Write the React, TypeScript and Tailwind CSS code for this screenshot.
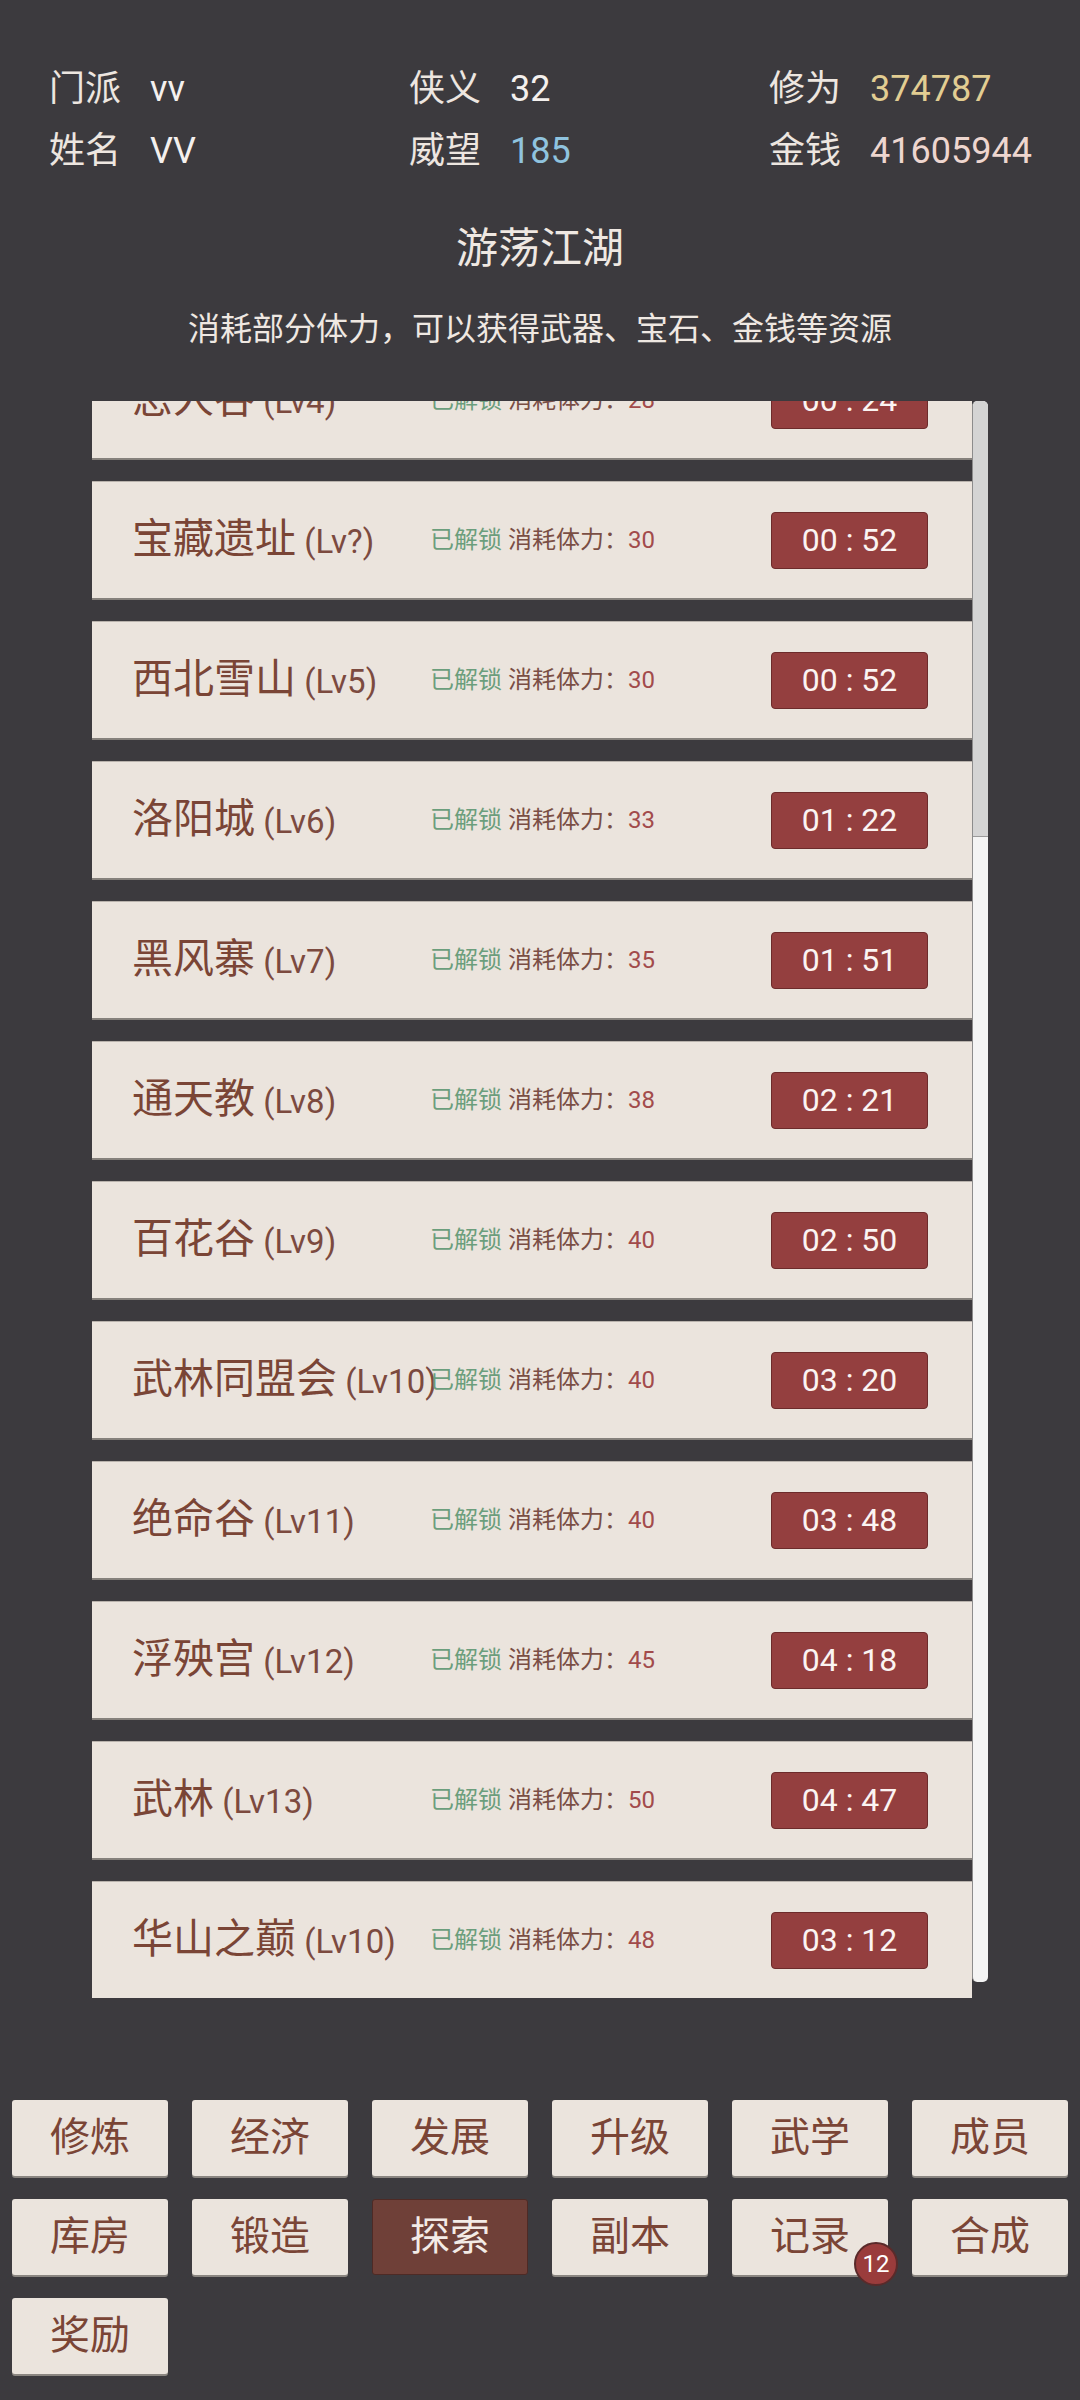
import React from 'react'

const places = [
    { name: '恶人谷', lv: 'Lv4', cost: 28, time: '00 : 24' },
    { name: '宝藏遗址', lv: 'Lv?', cost: 30, time: '00 : 52' },
    { name: '西北雪山', lv: 'Lv5', cost: 30, time: '00 : 52' },
    { name: '洛阳城', lv: 'Lv6', cost: 33, time: '01 : 22' },
    { name: '黑风寨', lv: 'Lv7', cost: 35, time: '01 : 51' },
    { name: '通天教', lv: 'Lv8', cost: 38, time: '02 : 21' },
    { name: '百花谷', lv: 'Lv9', cost: 40, time: '02 : 50' },
    { name: '武林同盟会', lv: 'Lv10', cost: 40, time: '03 : 20' },
    { name: '绝命谷', lv: 'Lv11', cost: 40, time: '03 : 48' },
    { name: '浮殃宫', lv: 'Lv12', cost: 45, time: '04 : 18' },
    { name: '武林', lv: 'Lv13', cost: 50, time: '04 : 47' },
    { name: '华山之巅', lv: 'Lv10', cost: 48, time: '03 : 12' },
]

const tabs = ['修炼', '经济', '发展', '升级', '武学', '成员', '库房', '锻造', '探索', '副本', '记录', '合成', '奖励']

const stats = [
    [
        { label: '门派', value: 'vv', color: 'text-[#f4f0ee]' },
        { label: '姓名', value: 'VV', color: 'text-[#f4f0ee]' },
    ],
    [
        { label: '侠义', value: '32', color: 'text-[#f4f0ee]' },
        { label: '威望', value: '185', color: 'text-[#8fc3df]' },
    ],
    [
        { label: '修为', value: '374787', color: 'text-[#e2cd92]' },
        { label: '金钱', value: '41605944', color: 'text-[#eed6cf]' },
    ],
]

const App = () => {
    return (
        <div className="min-h-[2400px] bg-[#3c3a3e] font-[Roboto,'Noto_Sans_CJK_SC',sans-serif] pt-[58px]">
            {/* header stats */}
            <div className="grid grid-cols-3">
                {stats.map((col, i) => (
                    <div key={i} className="pl-[49px] flex flex-col">
                        {col.map(s => (
                            <div key={s.label} className="flex items-center h-[62px] text-[36px] leading-none">
                                <span className="w-[101px] shrink-0 text-[#ede6e0]">{s.label}</span>
                                <span className={s.color}>{s.value}</span>
                            </div>
                        ))}
                    </div>
                ))}
            </div>

            <div className="mt-[36px] h-[60px] flex items-center justify-center text-[42px] text-[#efe8e2]">
                游荡江湖
            </div>
            <div className="mt-[27px] h-[48px] flex items-center justify-center text-[32px] text-[#efe8e2]">
                消耗部分体力，可以获得武器、宝石、金钱等资源
            </div>

            {/* list */}
            <div className="mt-[48px] ml-[92px] w-[896px] h-[1597px] flex">
                <div className="w-[880px] h-full overflow-hidden">
                    <div className="-mt-[59px] flex flex-col gap-[24px]">
                        {places.map(p => (
                            <div
                                key={p.name + p.lv}
                                className="h-[116px] shrink-0 bg-[#ebe4dd] flex items-center pr-[44px] shadow-[0_2px_0_#86817c,0_-1px_0_#b8b2ac]"
                            >
                                <div className="w-[338px] shrink-0 pl-[40px] whitespace-nowrap text-[#7a4536]">
                                    <span className="text-[41px]">{p.name}</span>
                                    <span className="text-[33px] text-[#7c4a3f]"> ({p.lv})</span>
                                </div>
                                <div className="flex-1 whitespace-nowrap text-[24px]">
                                    <span className="text-[#6b9e7c]">已解锁</span>
                                    <span className="text-[#7a4e44]"> 消耗体力：</span>
                                    <span className="text-[#a24b4b]">{p.cost}</span>
                                </div>
                                <div className="w-[157px] h-[57px] shrink-0 flex items-center justify-center rounded-[4px] bg-[#943f3f] border border-[#6d2b2b] text-[32px] text-[#fbf4f2]">
                                    {p.time}
                                </div>
                            </div>
                        ))}
                    </div>
                </div>
                {/* scrollbar */}
                <div className="w-[16px] h-[1581px] flex flex-col bg-[#f4f4f4] rounded-[5px] border-l border-[#8c8c8c] overflow-hidden">
                    <div className="h-[436px] bg-[#d4d4d4] border-b border-[#9a9a9a] rounded-t-[5px]" />
                </div>
            </div>

            {/* bottom nav */}
            <div className="mt-[102px] px-[12px] grid grid-cols-6 gap-x-[24px] gap-y-[23px]">
                {tabs.map(t => (
                    <div
                        key={t}
                        className={
                            t === '探索'
                                ? 'relative h-[76px] flex items-center justify-center rounded-[3px] bg-[#6f4038] border border-[#4e2a25] text-[40px] text-[#f3ebe6]'
                                : 'relative h-[76px] flex items-center justify-center rounded-[3px] bg-[#ebe4dd] shadow-[0_2px_0_#8b8681] text-[40px] text-[#7a4536]'
                        }
                    >
                        {t}
                        {t === '记录' && (
                            <span className="absolute right-[-10px] bottom-[-11px] w-[44px] h-[44px] rounded-full bg-[#9a3c3c] border-2 border-[#5a2a2a] flex items-center justify-center text-[24px] text-white">
                                12
                            </span>
                        )}
                    </div>
                ))}
            </div>
        </div>
    )
}

export default App
